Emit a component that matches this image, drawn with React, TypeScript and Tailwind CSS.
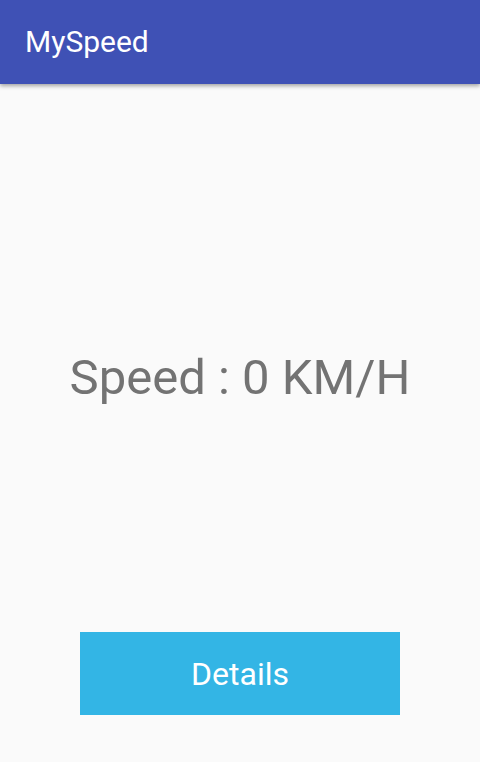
export default function App() {
  return (
    <div className="relative flex h-[762px] w-[480px] flex-col bg-[#fafafa] font-['Roboto',sans-serif]">
      <header className="relative z-10 flex h-[84px] items-center bg-[#3f51b5] pl-[25px] shadow-[0_2px_4px_rgba(0,0,0,0.35)]">
        <h1 className="text-[30px] leading-none text-white">MySpeed</h1>
      </header>
      <main className="flex flex-1 flex-col items-center">
        <p className="mt-[264px] text-[49px] leading-[60px] text-[#737373]">Speed : 0 KM/H</p>
        <button className="mt-auto mb-[47px] flex h-[83px] w-[320px] items-center justify-center bg-[#33b5e5] text-[32px] text-white">
          Details
        </button>
      </main>
    </div>
  );
}
